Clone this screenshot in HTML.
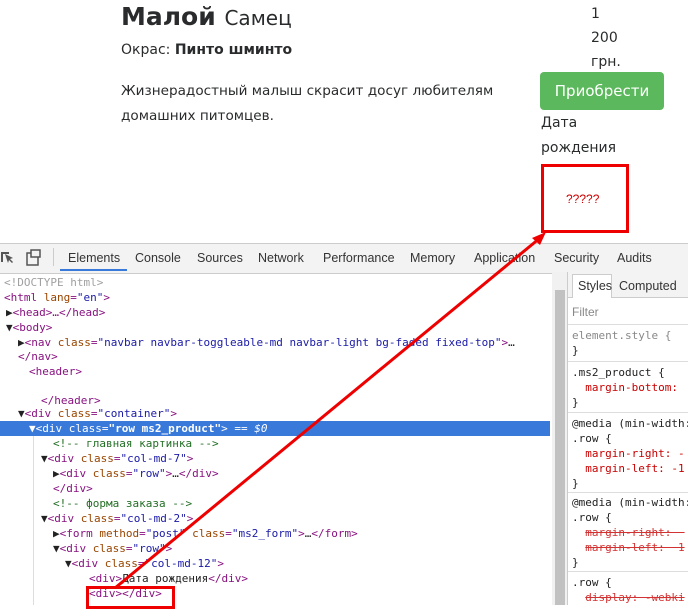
<!DOCTYPE html>
<html><head><meta charset="utf-8"><style>
body{margin:0;width:688px;height:605px;overflow:hidden;background:#fff;position:relative;font-family:"Liberation Sans","DejaVu Sans",sans-serif;}
.a{position:absolute;white-space:nowrap;}
.top{color:#292b2c;font-family:"DejaVu Sans","Liberation Sans",sans-serif;}
.row{position:absolute;height:15px;line-height:15px;white-space:nowrap;font-family:"DejaVu Sans Mono","Liberation Mono",monospace;font-size:11px;color:#a0a0a0;}
.t{color:#881280}.at{color:#994500}.v{color:#1a1aa6}.c{color:#236e25}.k{color:#222}
.tab{position:absolute;top:251px;font-size:12.5px;color:#333;font-family:"Liberation Sans",sans-serif;}
.sr{position:absolute;font-family:"DejaVu Sans Mono",monospace;font-size:11px;color:#222;white-space:nowrap;}
.p{color:#c80000}
.s{text-decoration:line-through;color:#c80000;opacity:.8}
</style></head><body>
<div class="a top" style="left:121px;top:2px;font-size:25px;font-weight:bold;">Малой <span style="font-weight:normal;font-size:20px;">Самец</span></div>
<div class="a top" style="left:121px;top:42px;font-size:14px;">Окрас: <b>Пинто шминто</b></div>
<div class="a top" style="left:121px;top:79px;font-size:13.6px;line-height:25px;">Жизнерадостный малыш скрасит досуг любителям<br>домашних питомцев.</div>
<div class="a top" style="left:591px;top:2px;font-size:14px;line-height:24px;">1<br>200<br>грн.</div>
<div class="a" style="left:540px;top:72px;width:124px;height:38px;background:#5cb85c;border-radius:4px;color:#fff;font-size:15px;line-height:38px;text-align:center;font-family:'DejaVu Sans',sans-serif;">Приобрести</div>
<div class="a top" style="left:541px;top:111px;font-size:14px;line-height:25px;">Дата<br>рождения</div>
<div class="a" style="left:541px;top:164px;width:82px;height:63px;border:3px solid #e00;box-sizing:content-box;"></div>
<div class="a" style="left:566px;top:192px;color:#c00;font-size:12px;">?????</div>

<div class="a" style="left:0;top:243px;width:688px;height:29px;background:#f3f3f3;border-top:1px solid #ccc;border-bottom:1px solid #ccc;"></div>
<svg class="a" style="left:0;top:249px" width="50" height="18"><path d="M1 3h8v2H3v8H1z M5 5l8 4-3 1 3 3-1 1-3-3-1 3z" fill="#555"/><rect x="27" y="4" width="11" height="12" fill="none" stroke="#555" stroke-width="1.5"/><rect x="31" y="1" width="9" height="7" fill="#f3f3f3" stroke="#555" stroke-width="1.5"/></svg>
<div class="a" style="left:53px;top:248px;width:1px;height:18px;background:#ccc"></div>
<div class="tab" style="left:68px">Elements</div>
<div class="a" style="left:60px;top:269px;width:67px;height:2px;background:#3879d9"></div>
<div class="tab" style="left:135px">Console</div>
<div class="tab" style="left:197px">Sources</div>
<div class="tab" style="left:258px">Network</div>
<div class="tab" style="left:323px">Performance</div>
<div class="tab" style="left:410px">Memory</div>
<div class="tab" style="left:474px">Application</div>
<div class="tab" style="left:554px">Security</div>
<div class="tab" style="left:617px">Audits</div>

<div class="a" style="left:0;top:421px;width:550px;height:15px;background:#3879d9"></div>
<div class="row" style="left:4px;top:275px">&lt;!DOCTYPE html&gt;</div>
<div class="row" style="left:4px;top:290px"><span class="t">&lt;html </span><span class="at">lang</span><span class="t">=</span><span class="v">"en"</span><span class="t">&gt;</span></div>
<div class="row" style="left:6px;top:305px"><span class="k">▶</span><span class="t">&lt;head&gt;…&lt;/head&gt;</span></div>
<div class="row" style="left:6px;top:320px"><span class="k">▼</span><span class="t">&lt;body&gt;</span></div>
<div class="row" style="left:18px;top:335px"><span class="k">▶</span><span class="t">&lt;nav </span><span class="at">class</span><span class="t">=</span><span class="v">"navbar navbar-toggleable-md navbar-light bg-faded fixed-top"</span><span class="t">&gt;</span><span class="k">…</span></div>
<div class="row" style="left:18px;top:349px"><span class="t">&lt;/nav&gt;</span></div>
<div class="row" style="left:29px;top:364px"><span class="t">&lt;header&gt;</span></div>
<div class="row" style="left:41px;top:393px"><span class="t">&lt;/header&gt;</span></div>
<div class="row" style="left:18px;top:406px"><span class="k">▼</span><span class="t">&lt;div </span><span class="at">class</span><span class="t">=</span><span class="v">"container"</span><span class="t">&gt;</span></div>
<div class="row" style="left:29px;top:421px;color:#fff"><span>▼&lt;div </span><span>class</span>=<span style="font-weight:bold">"row ms2_product"</span>&gt; == <i>$0</i></div>
<div class="row" style="left:53px;top:436px"><span class="c">&lt;!-- главная картинка --&gt;</span></div>
<div class="row" style="left:41px;top:451px"><span class="k">▼</span><span class="t">&lt;div </span><span class="at">class</span><span class="t">=</span><span class="v">"col-md-7"</span><span class="t">&gt;</span></div>
<div class="row" style="left:53px;top:466px"><span class="k">▶</span><span class="t">&lt;div </span><span class="at">class</span><span class="t">=</span><span class="v">"row"</span><span class="t">&gt;</span><span class="k">…</span><span class="t">&lt;/div&gt;</span></div>
<div class="row" style="left:53px;top:481px"><span class="t">&lt;/div&gt;</span></div>
<div class="row" style="left:53px;top:496px"><span class="c">&lt;!-- форма заказа --&gt;</span></div>
<div class="row" style="left:41px;top:511px"><span class="k">▼</span><span class="t">&lt;div </span><span class="at">class</span><span class="t">=</span><span class="v">"col-md-2"</span><span class="t">&gt;</span></div>
<div class="row" style="left:53px;top:526px"><span class="k">▶</span><span class="t">&lt;form </span><span class="at">method</span><span class="t">=</span><span class="v">"post"</span> <span class="at">class</span><span class="t">=</span><span class="v">"ms2_form"</span><span class="t">&gt;</span><span class="k">…</span><span class="t">&lt;/form&gt;</span></div>
<div class="row" style="left:53px;top:541px"><span class="k">▼</span><span class="t">&lt;div </span><span class="at">class</span><span class="t">=</span><span class="v">"row"</span><span class="t">&gt;</span></div>
<div class="row" style="left:65px;top:556px"><span class="k">▼</span><span class="t">&lt;div </span><span class="at">class</span><span class="t">=</span><span class="v">"col-md-12"</span><span class="t">&gt;</span></div>
<div class="row" style="left:89px;top:571px"><span class="t">&lt;div&gt;</span><span class="k">Дата рождения</span><span class="t">&lt;/div&gt;</span></div>
<div class="row" style="left:89px;top:586px"><span class="t">&lt;div&gt;&lt;/div&gt;</span></div>
<div class="a" style="left:33px;top:436px;width:1px;height:169px;background:#ddd"></div>

<div class="a" style="left:552px;top:272px;width:15px;height:333px;background:#f1f1f1"></div>
<div class="a" style="left:555px;top:290px;width:10px;height:315px;background:#c1c1c1"></div>
<div class="a" style="left:567px;top:272px;width:1px;height:333px;background:#ccc"></div>
<div class="a" style="left:568px;top:272px;width:120px;height:25px;background:#f3f3f3;border-bottom:1px solid #ccc"></div>
<div class="a" style="left:572px;top:274px;width:38px;height:23px;background:#fff;border:1px solid #ccc;border-bottom:none"></div>
<div class="tab" style="left:578px;top:279px">Styles</div>
<div class="tab" style="left:619px;top:279px">Computed</div>
<div class="a" style="left:572px;top:305px;font-size:12px;color:#888;font-family:'Liberation Sans',sans-serif">Filter</div>
<div class="a" style="left:568px;top:324px;width:120px;height:1px;background:#ddd"></div>
<div class="sr" style="left:572px;top:328px;line-height:15px"><span style="color:#888">element.style {</span><br>}</div>
<div class="a" style="left:568px;top:361px;width:120px;height:1px;background:#ddd"></div>
<div class="sr" style="left:572px;top:365px;line-height:15px">.ms2_product {<br>&nbsp;&nbsp;<span class="p">margin-bottom:</span><br>}</div>
<div class="a" style="left:568px;top:412px;width:120px;height:1px;background:#ddd"></div>
<div class="sr" style="left:572px;top:416px;line-height:15px">@media (min-width:<br>.row {<br>&nbsp;&nbsp;<span class="p">margin-right: -</span><br>&nbsp;&nbsp;<span class="p">margin-left: -1</span><br>}</div>
<div class="a" style="left:568px;top:492px;width:120px;height:1px;background:#ddd"></div>
<div class="sr" style="left:572px;top:495px;line-height:15px">@media (min-width:<br>.row {<br>&nbsp;&nbsp;<span class="s">margin-right: &nbsp;</span><br>&nbsp;&nbsp;<span class="s">margin-left: &nbsp;1</span><br>}</div>
<div class="a" style="left:568px;top:571px;width:120px;height:1px;background:#ddd"></div>
<div class="sr" style="left:572px;top:575px;line-height:15px">.row {<br>&nbsp;&nbsp;<span class="s">display: -webki</span></div>

<div class="a" style="left:86px;top:586px;width:83px;height:17px;border:3px solid #e00"></div>
<svg class="a" style="left:0;top:0" width="688" height="605"><line x1="115" y1="588" x2="540" y2="238" stroke="#e00" stroke-width="3"/><polygon points="546,232 532,238 540,245" fill="#e00"/></svg>
</body></html>
